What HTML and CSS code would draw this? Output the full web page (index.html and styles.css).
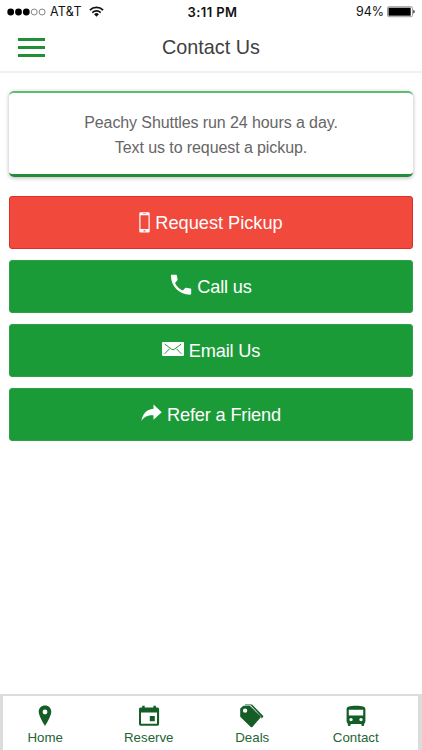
FILE: index.html
```html
<!DOCTYPE html>
<html lang="en">
<head>
<meta charset="utf-8">
<title>Contact Us</title>
<link rel="stylesheet" href="styles.css">
</head>
<body>
<div class="status">
  <div class="carrier">
    <svg class="signal" width="39" height="8" viewBox="0 0 39 8"><g fill="#000"><circle cx="3.7" cy="4" r="3.4"/><circle cx="11.5" cy="4" r="3.4"/><circle cx="19.3" cy="4" r="3.4"/></g><g fill="none" stroke="#555" stroke-width=".7"><circle cx="27.2" cy="4" r="3"/><circle cx="35.1" cy="4" r="3"/></g></svg>
    <span class="network">AT&amp;T</span>
    <svg class="wifi" width="15" height="11" viewBox="0 0 15 11"><g fill="none" stroke="#111" stroke-width="1.7"><path d="M.9 4.1a9.3 9.3 0 0 1 13.2 0"/><path d="M3.3 6.6a6 6 0 0 1 8.4 0"/></g><path d="M5.1 8.2a3.4 3.4 0 0 1 4.8 0L7.5 10.7z" fill="#111"/></svg>
  </div>
  <div class="time">3:11 PM</div>
  <div class="power">
    <span>94%</span>
    <svg width="28" height="12" viewBox="0 0 28 12"><rect x=".5" y=".7" width="25" height="10" rx="1.5" fill="#fff" stroke="#777" stroke-width=".7"/><path d="M1.5 1.7h22.2v8H1.5z"/><path d="M26.3 3.8q1.4.5 1.4 1.9t-1.4 1.9z" fill="#222"/></svg>
  </div>
</div>
<header class="header">
  <div class="menu"><i></i><i></i><i></i></div>
  <h1>Contact Us</h1>
</header>
<main>
  <section class="card">
    <p>Peachy Shuttles run 24 hours a day.</p>
    <p>Text us to request a pickup.</p>
  </section>
  <a class="button red">
    <svg class="phone" width="11" height="21" viewBox="0 0 11 21"><path fill-rule="evenodd" d="M1.500.3h8q1.200 0 1.200 1.200v17.800q0 1.200-1.200 1.200h-8Q.3 20.500.3 19.300V1.500Q.3.300 1.500.300zM1.500 3.200v13.800h8V3.200zM4 1.400v.7h3v-.7zM4.500 18.200v1.200h2v-1.200z"/></svg>
    <span>Request Pickup</span>
  </a>
  <a class="button green">
    <svg class="call" width="22" height="22" viewBox="0 0 22 22"><path d="M1.700.8H6q.8 0 .9.800l.7 4q.1.600-.3 1L5 9c1.700 3.400 4.400 5.900 7.800 7.500l2.400-2.500q.4-.4 1-.3l4.200.7q.8.200.8.900v4.300q0 1.100-1.100 1.100C9.500 20.700 1 12.400.9 1.800Q.9.800 1.700.8z"/></svg>
    <span>Call us</span>
  </a>
  <a class="button green">
    <svg class="mail" width="22" height="14" viewBox="0 0 22 14"><rect width="22" height="14" rx="1"/><path d="M2.700 2 9.700 7.300q1.300.9 2.600 0L19.300 2M2.700 11.800l4.800-5M19.300 11.800l-4.800-5" fill="none" stroke="#1b9b38" stroke-width="1"/></svg>
    <span>Email Us</span>
  </a>
  <a class="button green">
    <svg class="share" width="21" height="18" viewBox="0 0 21 18"><path d="M12.500.600 20.700 8.200l-8.200 7.600v-4.500C7 11.100 3.500 12.500.4 17 1.700 10 5.200 5.200 12.500 4.700z"/></svg>
    <span>Refer a Friend</span>
  </a>
</main>
<nav class="tabs">
  <a class="tab"><svg width="22" height="26" viewBox="0 0 22 26"><path fill-rule="evenodd" d="M11 2.600c-3.700 0-6.300 2.700-6.300 6.200C4.700 13.300 11 23 11 23s6.300-9.700 6.300-14.200c0-3.500-2.600-6.200-6.300-6.200zm0 4a2.400 2.400 0 1 1 0 4.800 2.400 2.400 0 0 1 0-4.800z"/></svg><span>Home</span></a>
  <a class="tab"><svg width="22" height="26" viewBox="0 0 22 26"><path fill-rule="evenodd" d="M4.200 2.700h2.500v1.700h8.700V2.700h2.500v1.700h1.600q1.600 0 1.600 1.600v15q0 1.700-1.600 1.700H2.600Q1 22.700 1 21V6q0-1.600 1.600-1.600h1.600zM3 9.600v11.100h16V9.600zM11.800 13.100h5v5.200h-5z"/></svg><span>Reserve</span></a>
  <a class="tab"><svg width="26" height="26" viewBox="0 0 26 26"><path fill-rule="evenodd" d="M1.200 5.400 4.400 2.800h6.400l10.600 10.300q.8.800 0 1.700l-8 9.100q-.8.900-1.700 0L1.200 13.700zM6.100 5.400a2.200 2.200 0 1 0 0 4.400 2.200 2.200 0 0 0 0-4.400z"/><path d="M6 1.400h7l11 11.300q.7.700 0 1.400l-1.400 1.600q-.1-1.900-1.200-3L11.700 2.300H6z"/></svg><span>Deals</span></a>
  <a class="tab"><svg width="22" height="26" viewBox="0 0 22 26"><path fill-rule="evenodd" d="M1.600 6.200C1.600 3.500 4.500 2.700 11 2.700s9.400.8 9.400 3.500V18q0 1.600-1.200 2.400v1.700q0 .8-.8.800h-1.200q-.8 0-.8-.8V21H5.600v1.100q0 .8-.8.800H3.600q-.8 0-.8-.8v-1.700Q1.600 19.600 1.600 18zM3.800 6.800v5.700h14.400V6.800zM6 14.900a1.700 1.700 0 1 0 0 3.400 1.700 1.700 0 0 0 0-3.400zM16 14.900a1.700 1.700 0 1 0 0 3.400 1.700 1.700 0 0 0 0-3.400z"/></svg><span>Contact</span></a>
</nav>
</body>
</html>
```
FILE: styles.css
```css
* { box-sizing: border-box; }
body {
  margin: 0;
  height: 750px;
  display: flex;
  flex-direction: column;
  overflow: hidden;
  background: #fff;
  font-family: "Liberation Sans", Arial, sans-serif;
}
svg { display: block; flex: none; }
.status {
  height: 24px;
  display: grid;
  grid-template-columns: 1fr auto 1fr;
  align-items: center;
  padding: 0 7px;
  color: #111;
  font-family: Inter, sans-serif;
  font-size: 12.5px;
  line-height: 24px;
}
.carrier, .power { display: flex; align-items: center; }
.network { margin-left: 4px; width: 32px; letter-spacing: .3px; }
.wifi { margin-left: 7px; margin-top: -2px; }
.time { font-weight: 600; font-size: 13px; letter-spacing: .4px; margin-left: 3px; }
.power { justify-content: flex-end; gap: 3px; }
.header {
  height: 49px;
  flex: none;
  display: grid;
  grid-template-columns: 62px 1fr 62px;
  align-items: center;
  border-bottom: 2px solid #f1f1f1;
}
.menu { display: flex; flex-direction: column; gap: 5px; padding-left: 18px; }
.menu i { width: 27px; height: 3px; background: #218f36; }
h1 {
  margin: 0;
  color: #404040;
  font: 400 19.8px "Liberation Sans", sans-serif;
  text-align: center;
}
main { flex: 1; padding: 18px 9px 0; }
.card {
  height: 86px;
  margin-bottom: 19px;
  padding-top: 17px;
  border-top: 2px solid #62bb72;
  border-bottom: 3px solid #238c37;
  border-radius: 5px;
  box-shadow: 0 1px 4px rgba(0, 0, 0, .28);
  text-align: center;
  color: #666;
  font-size: 16px;
  letter-spacing: -.09px;
  line-height: 25px;
}
.card p { margin: 0; }
.button {
  height: 53px;
  margin-bottom: 11px;
  display: flex;
  align-items: center;
  justify-content: center;
  gap: 5px;
  border: 1px solid #2ba246;
  border-radius: 3px;
  background: #1b9b38;
  color: #fff;
  fill: #fff;
  font-size: 18.2px;
}
.button.red { background: #f1493c; border-color: #d92f27; }
.button.green { letter-spacing: -.17px; }
.button span { margin-top: 1px; }
.call { margin-top: -4px; }
.mail { margin-top: -3px; }
.share { margin-top: -3px; }
.tabs {
  height: 56px;
  flex: none;
  display: grid;
  grid-template-columns: repeat(4, 103.5px);
  border: solid #dcdcdc;
  border-width: 2px 4px 0 3px;
  padding-top: 7px;
  color: #246434;
  fill: #155d27;
  font-size: 13.3px;
}
.tab { display: flex; flex-direction: column; align-items: center; margin-left: -19px; }
.tab span { line-height: 17px; }
```
